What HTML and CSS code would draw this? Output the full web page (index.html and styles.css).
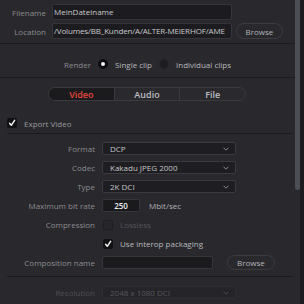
FILE: index.html
```html
<!DOCTYPE html>
<html>
<head>
<meta charset="utf-8">
<link rel="stylesheet" href="styles.css">
</head>
<body>
<div class="app">
  <div class="content">
    <section class="file-sec">
      <div class="frow">
        <span class="flabel">Filename</span>
        <div class="finput">MeinDateiname</div>
      </div>
      <div class="frow">
        <span class="flabel">Location</span>
        <div class="finput loc">/Volumes/BB_Kunden/A/ALTER-MEIERHOF/AME</div>
        <button class="pill top-browse">Browse</button>
      </div>
    </section>
    <section class="render-sec">
      <span class="label">Render</span>
      <span class="radio on"></span>
      <span class="val">Single clip</span>
      <span class="radio"></span>
      <span class="val">Individual clips</span>
    </section>
    <section class="main">
      <div class="tabs">
        <span class="tab active">Video</span>
        <span class="tab">Audio</span>
        <span class="tab">File</span>
      </div>
      <div class="export">
        <span class="check on"><svg viewBox="0 0 10 10" width="10" height="10"><path d="M2.6 5.3 L4.3 7.3 L7.6 2.4" fill="none" stroke="#f2f2f2" stroke-width="1.5" stroke-linecap="round" stroke-linejoin="round"/></svg></span>
        <span class="export-text">Export Video</span>
      </div>
      <div class="rule"></div>
      <div class="form">
        <span class="label">Format</span>
        <div class="select"><span>DCP</span><svg class="chev" viewBox="0 0 6 4" width="6" height="4"><path d="M0.5 0.7 L3 3.2 L5.5 0.7" fill="none" stroke="#8a8a8f" stroke-width="1"/></svg></div>

        <span class="label">Codec</span>
        <div class="select"><span>Kakadu JPEG 2000</span><svg class="chev" viewBox="0 0 6 4" width="6" height="4"><path d="M0.5 0.7 L3 3.2 L5.5 0.7" fill="none" stroke="#8a8a8f" stroke-width="1"/></svg></div>

        <span class="label">Type</span>
        <div class="select"><span>2K DCI</span><svg class="chev" viewBox="0 0 6 4" width="6" height="4"><path d="M0.5 0.7 L3 3.2 L5.5 0.7" fill="none" stroke="#8a8a8f" stroke-width="1"/></svg></div>

        <span class="label">Maximum bit rate</span>
        <div class="ctl"><div class="num">250</div><span class="unit">Mbit/sec</span></div>

        <span class="label">Compression</span>
        <div class="ctl"><span class="check off"></span><span class="dim">Lossless</span></div>

        <span class="label"></span>
        <div class="ctl"><span class="check on"><svg viewBox="0 0 10 10" width="10" height="10"><path d="M2.6 5.3 L4.3 7.3 L7.6 2.4" fill="none" stroke="#f2f2f2" stroke-width="1.5" stroke-linecap="round" stroke-linejoin="round"/></svg></span><span class="val">Use interop packaging</span></div>

        <span class="label">Composition name</span>
        <div class="ctl"><div class="comp"></div><button class="pill comp-browse">Browse</button></div>
      </div>
      <div class="rule rule2"></div>
      <div class="form res">
        <span class="label dimlabel">Resolution</span>
        <div class="select disabled"><span>2048 x 1080 DCI</span><svg class="chev" viewBox="0 0 6 4" width="6" height="4"><path d="M0.5 0.7 L3 3.2 L5.5 0.7" fill="none" stroke="#4a4a4f" stroke-width="1"/></svg></div>
      </div>
    </section>
  </div>
  <div class="scroll"><div class="thumb"></div></div>
  <div class="edge"></div>
</div>
</body>
</html>
```

FILE: styles.css
```css
html, body {
  margin: 0;
  padding: 0;
}
body {
  width: 304px;
  height: 304px;
  overflow: hidden;
  background: #28282d;
  font-family: "Open Sans", "DejaVu Sans", sans-serif;
  font-size: 8px;
  color: #8c8c91;
}
.app {
  display: flex;
  height: 304px;
}
.content {
  width: 295px;
  flex: none;
}
.scroll {
  width: 5px;
  flex: none;
}
.thumb {
  height: 190px;
  background: #4b4e55;
  border-radius: 0 0 2px 2px;
}
.edge {
  width: 4px;
  flex: none;
  background: #1d1d21;
}

/* top file section */
.file-sec {
  padding: 4px 0 4px;
  display: flex;
  flex-direction: column;
  gap: 3px;
  border-bottom: 1px solid #1b1b1f;
}
.frow {
  display: flex;
  align-items: center;
  height: 16px;
}
.flabel {
  width: 46px;
  margin-right: 6px;
  text-align: right;
  flex: none;
}
.finput {
  width: 180px;
  height: 16px;
  box-sizing: border-box;
  background: #1c1c20;
  border: 1px solid #34343a;
  border-radius: 2px;
  padding: 0 1px;
  color: #c8c8cc;
  line-height: 14px;
  white-space: nowrap;
  overflow: hidden;
  flex: none;
}
.finput.loc {
  letter-spacing: -0.15px;
}
.pill {
  font-family: "Open Sans", "DejaVu Sans", sans-serif;
  font-size: 8px;
  color: #b4b4b9;
  background: transparent;
  border: 1px solid #3b3b41;
  border-radius: 8px;
  padding: 0;
  box-sizing: border-box;
  flex: none;
}
.top-browse {
  margin-left: 4px;
  width: 47px;
  height: 16px;
}

/* render section */
.render-sec {
  height: 10px;
  padding: 15px 0 8px;
  display: flex;
  justify-content: center;
  align-items: center;
  gap: 7px;
  border-bottom: 1px solid #1b1b1f;
}
.radio {
  width: 10px;
  height: 10px;
  border-radius: 50%;
  background: #1c1c1f;
  box-sizing: border-box;
  border: 1px solid #232327;
  display: flex;
  align-items: center;
  justify-content: center;
}
.radio.on {
  background: #0d0d0f;
  border-color: #0d0d0f;
}
.radio.on::after {
  content: "";
  width: 4px;
  height: 4px;
  border-radius: 50%;
  background: #f0f0f0;
}
.val {
  color: #b9b9be;
}
.label {
  color: #8c8c91;
}

/* main */
.main {
  padding: 9px 2px 0 7px;
}
.tabs {
  width: 198px;
  height: 14px;
  margin-left: 41px;
  display: flex;
  box-sizing: border-box;
  border: 1px solid #3a3a40;
  border-radius: 7px;
  overflow: hidden;
  background: #29292e;
}
.tab {
  flex: 1;
  display: flex;
  align-items: center;
  justify-content: center;
  font-size: 9px;
  font-weight: 600;
  color: #bdbdc2;
  border-left: 1px solid #3a3a40;
}
.tab:first-child {
  border-left: none;
}
.tab.active {
  background: #1b1b1e;
  color: #e4463c;
}
.export {
  margin-top: 17px;
  height: 10px;
  display: flex;
  align-items: center;
  gap: 7px;
}
.export-text {
  color: #9a9a9f;
}
.check {
  width: 10px;
  height: 10px;
  border-radius: 2px;
  box-sizing: border-box;
  flex: none;
  display: block;
}
.check svg {
  display: block;
}
.check.on {
  background: #111113;
}
.check.off {
  background: #26262a;
  border: 1px solid #202024;
}
.rule {
  margin-top: 5px;
  height: 1px;
  background: #1b1b1f;
}
.form {
  margin-top: 8px;
  display: grid;
  grid-template-columns: 88px 191px;
  grid-auto-rows: 13px;
  column-gap: 7px;
  row-gap: 6px;
  align-items: center;
}
.form .label {
  text-align: right;
  white-space: nowrap;
}
.select {
  width: 134px;
  height: 13px;
  box-sizing: border-box;
  background: #1e1e22;
  border: 1px solid #3a3a40;
  border-radius: 2px;
  padding: 0 6px 0 7px;
  display: flex;
  align-items: center;
  justify-content: space-between;
  color: #c4c4c8;
}
.chev {
  display: block;
}
.ctl {
  display: flex;
  align-items: center;
  height: 13px;
}
.num {
  width: 38px;
  height: 13px;
  box-sizing: border-box;
  background: #1a1a1d;
  border: 1px solid #34343a;
  border-radius: 2px;
  text-align: center;
  line-height: 11px;
  color: #f0f0f2;
  font-weight: 600;
}
.unit {
  margin-left: 9px;
  color: #b0b0b5;
}
.ctl .check {
  margin-left: 1px;
  margin-right: 7px;
}
.dim {
  color: #55555a;
}
.comp {
  width: 111px;
  height: 13px;
  box-sizing: border-box;
  background: #1b1b1e;
  border: 1px solid #36363c;
  border-radius: 2px;
}
.comp-browse {
  margin-left: 14px;
  width: 48px;
  height: 15px;
}
.rule2 {
  margin-top: 7px;
}
.res {
  margin-top: 9px;
}
.dimlabel {
  color: #4f4f54;
}
.select.disabled {
  background: #252529;
  border-color: #2d2d32;
  color: #55555a;
}
```
